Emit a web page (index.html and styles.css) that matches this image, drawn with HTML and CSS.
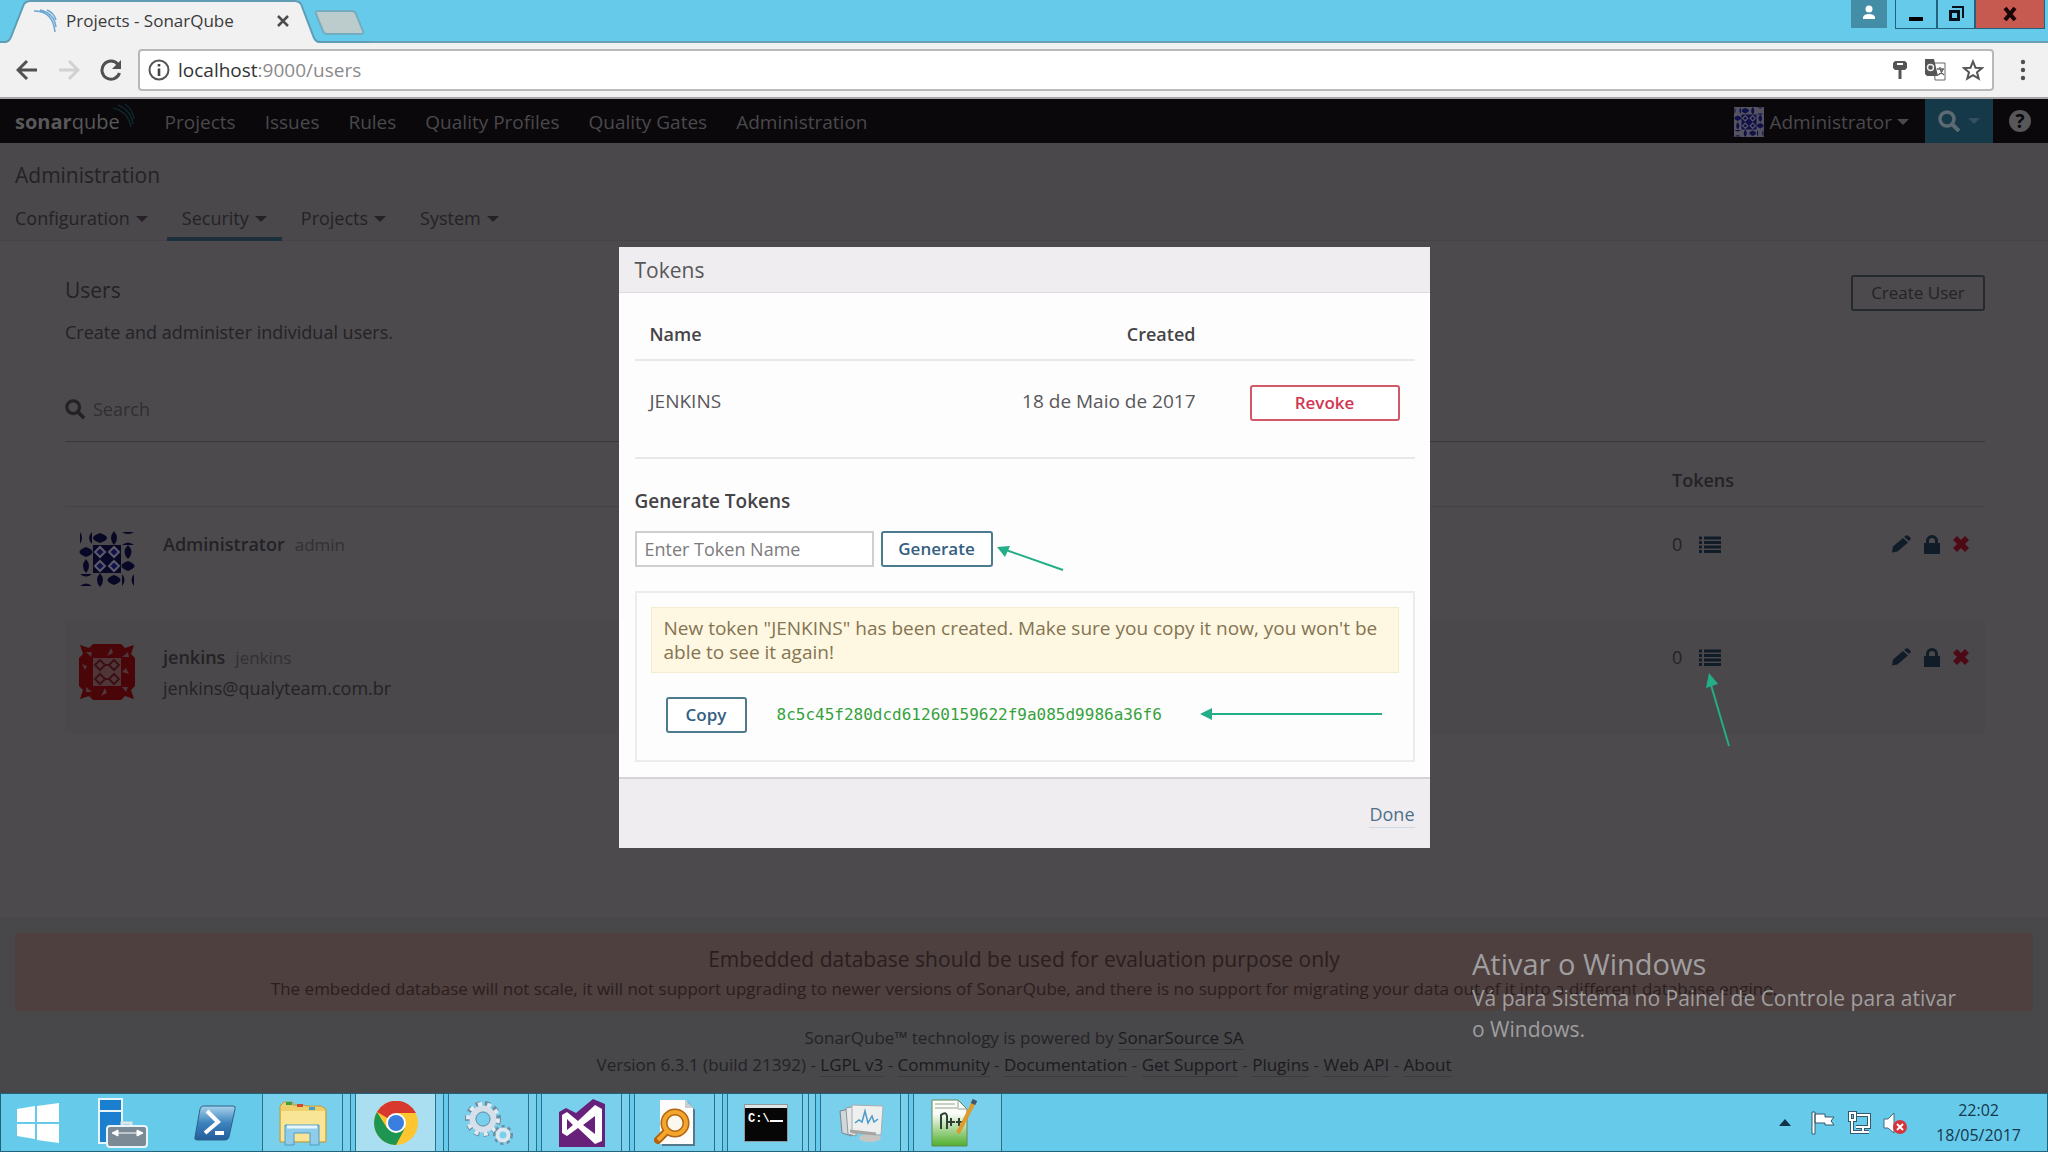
FILE: index.html
```html
<!DOCTYPE html>
<html lang="pt-BR">
<head>
<meta charset="utf-8">
<title>Projects - SonarQube</title>
<link rel="stylesheet" href="styles.css">
</head>
<body>

<!-- shared icons -->
<svg class="sprite" aria-hidden="true">
  <symbol id="list" viewBox="0 0 22 18">
    <path d="M5 1.5h17v3H5zM5 6h17v3H5zM5 10.500h17v3H5zM5 15h17v3H5zM0 1.500h3v3H0zM0 6h3v3H0zM0 10.500h3v3H0zM0 15h3v3H0z"/>
  </symbol>
  <symbol id="pencil" viewBox="0 0 20 18">
    <path d="M1 17.500l1-6L12 3l5 4.500L6.500 16.500zM13.200 2l1.600-1.500q1.200-.8 2.500.2l1.900 1.800q1 1.200 0 2.200L18 6z"/>
  </symbol>
  <symbol id="lock" viewBox="0 0 16 20">
    <path fill-rule="evenodd" d="M0 9h2V7a6 6 0 0 1 12 0v2h2v11H0zM5 9h6V7a3 3 0 0 0-6 0z"/>
  </symbol>
  <symbol id="cross" viewBox="0 0 16 16">
    <path d="M0 4l4-4 4 4 4-4 4 4-4 4 4 4-4 4-4-4-4 4-4-4 4-4z"/>
  </symbol>
  <symbol id="magnifier" viewBox="0 0 22 22">
    <circle cx="9" cy="9" r="7" fill="none" stroke="currentColor" stroke-width="3.500"/>
    <path d="M14 14l7 7" stroke="currentColor" stroke-width="4"/>
  </symbol>
  <symbol id="blue-avatar" viewBox="0 0 56 56">
    <g fill="currentColor">
      <path d="M14 14h28v28H14z"/>
      <path d="M1 1q4 6 0 12zM13 1q-6 6 0 12zM21 2q-14 5 0 10 14-5 0-10zM35 0q-6 7 0 14 6-7 0-14zM43 1h12q-6 4-12 0zM43 14q6-5 12 0z"/>
      <path d="M7 16q-13 5 0 10 13-5 0-10zM7 28q-6 7 0 14 6-7 0-14zM49 14q-7 7 0 14 7-7 0-14zM49 30q-13 5 0 10 13-5 0-10z"/>
      <path d="M1 43h12q-6 5-12 0zM1 55q6-5 12 0zM21 42q-6 7 0 14 6-7 0-14zM35 44q-13 5 0 10 13-5 0-10zM43 43q5 6 0 12zM55 43q-5 6 0 12z"/>
    </g>
    <path class="hole" d="M21 16l5 5-5 5-5-5zM35 16l5 5-5 5-5-5zM21 30l5 5-5 5-5-5zM35 30l5 5-5 5-5-5z"/>
  </symbol>
  <symbol id="red-avatar" viewBox="0 0 56 56">
    <path fill="#4a0508" d="M14 0h28l4 4 9-3-3 9 4 4v28l-4 4 3 9-9-3-4 4H14l-4-4-9 3 3-9-4-4V14l4-4-3-9 9 3z"/>
    <path fill="#4f3638" d="M14 14h28v28H14z"/>
    <path fill="#4f3638" d="M28 12l4-8 2 5zM43 28l4-4 3 6zM22 52l4-8 2 5zM6 26l-3-6 5 2zM7 8l6 0-1 5zM43 13l6-5 1 5zM7 43l6 5-6 0zM43 43l6 0-2 5z"/>
    <g fill="none" stroke="#3d1114" stroke-width="2"><path d="M21 16l5 5-5 5-5-5zM35 16l5 5-5 5-5-5zM21 30l5 5-5 5-5-5zM35 30l5 5-5 5-5-5zM26 21h4M26 35h4"/></g>
  </symbol>
</svg>

<div class="tabstrip">
  <svg class="tab-shape" width="370" height="43" viewBox="0 0 370 43">
    <path d="M4 43q5 0 7-6L24 4q2-4 6-4h265q4 0 6 4l13 34q2 5 6 5z" fill="#f2f1f2"/>
    <path d="M0 42h5q4 0 6-5L24 4q2-3 6-3h265q4 0 6 3l13 34q2 4 6 4h50" fill="none" stroke="#5f9db4" stroke-width="2"/>
    <path d="M318 11h34q3 0 4 3l7 17q1 3-2 3h-34q-3 0-4-3l-7-17q-1-3 2-3z" fill="#bccbcb" stroke="#74adc0" stroke-width="2"/>
  </svg>
  <div class="tab">
    <svg width="24" height="24" viewBox="0 0 24 24" fill="none" stroke="#6aa7d2" stroke-width="1.500"><path d="M1 2q19 0 21 21M7 1q14 3 16 17M14 1q7 3 9 10"/></svg>
    <span class="tab-title">Projects - SonarQube</span>
    <button class="tab-close" aria-label="Fechar guia"><svg width="14" height="14" viewBox="0 0 14 14" stroke="#4c4c4c" stroke-width="2.500"><path d="M2 2l10 10M12 2L2 12"/></svg></button>
  </div>
  <div class="window-buttons">
    <button class="profile" aria-label="Perfil"><svg width="16" height="20" viewBox="0 0 16 20" fill="#fff"><circle cx="8" cy="5" r="3.500"/><path d="M2 15v-2q1-3 6-3t6 3v2z"/></svg></button>
    <button class="minimize" aria-label="Minimizar"><svg width="16" height="18" viewBox="0 0 16 18"><path d="M1 12h14v4H1z"/></svg></button>
    <button class="restore" aria-label="Restaurar"><svg width="16" height="18" viewBox="0 0 16 18" fill="none" stroke="#061018"><path d="M2.500 6.500h8v8h-8z" stroke-width="3"/><path d="M4 2h11v11" stroke-width="2"/></svg></button>
    <button class="close" aria-label="Fechar"><svg width="14" height="14" viewBox="0 0 14 14" stroke="#1a0606" stroke-width="4"><path d="M2 1l10 12M12 1L2 13"/></svg></button>
  </div>
</div>

<div class="toolbar">
  <button aria-label="Voltar"><svg width="22" height="22" viewBox="0 0 22 22" fill="none" stroke="#505050" stroke-width="3"><path d="M21 11H3M11 2l-9 9 9 9"/></svg></button>
  <button aria-label="Avançar"><svg width="22" height="22" viewBox="0 0 22 22" fill="none" stroke="#d2d1d2" stroke-width="3"><path d="M1 11h18M11 2l9 9-9 9"/></svg></button>
  <button aria-label="Recarregar"><svg width="22" height="22" viewBox="0 0 22 22" fill="none" stroke="#505050" stroke-width="3"><path d="M19.500 14A9 9 0 1 1 18 5.500"/><path d="M21 1v9h-9z" fill="#505050" stroke="none"/></svg></button>
  <div class="address">
    <svg width="22" height="22" viewBox="0 0 22 22"><circle cx="11" cy="11" r="9.500" fill="none" stroke="#555" stroke-width="2"/><path d="M9.700 5h2.600v2.600H9.700zM9.700 9.500h2.600V17H9.700z" fill="#444"/></svg>
    <span class="url">localhost<span>:9000/users</span></span>
    <svg width="16" height="20" viewBox="0 0 16 20" fill="#555"><path d="M3 1h10l2 2v5l-2 2H9.500v9h-3v-9H3L1 8V3zM5 3v2h6V3z" fill-rule="evenodd"/></svg>
    <svg width="22" height="22" viewBox="0 0 22 22"><path d="M10 4h11v17H11z" fill="#fff" stroke="#666"/><path d="M1 0h9l4 17H3l-2-2z" fill="#555"/><circle cx="6.500" cy="8.500" r="3" fill="none" stroke="#eee" stroke-width="1.500"/><path d="M13 10h7M16 8v2q1 4 4 6M19 10q-1 4-5 6" fill="none" stroke="#666" stroke-width="1.300"/></svg>
    <svg width="22" height="22" viewBox="0 0 22 22" fill="none" stroke="#555" stroke-width="2"><path d="M11 2.500l2.500 6.200 6.500.4-5 4.200 1.700 6.300-5.700-3.500-5.700 3.500L7 13.300 2 9.100l6.500-.4z"/></svg>
  </div>
  <button aria-label="Menu"><svg width="6" height="22" viewBox="0 0 6 22" fill="#505050"><circle cx="3" cy="3" r="2.200"/><circle cx="3" cy="11" r="2.200"/><circle cx="3" cy="19" r="2.200"/></svg></button>
</div>

<div class="page">
  <nav class="global-nav">
    <a class="logo" href="#"><b>sonar</b>qube<svg width="24" height="30" viewBox="0 0 24 30" fill="none" stroke="#10262d" stroke-width="1.500"><path d="M1 7q15 3 18 19M6 4q13 5 15 19M13 3q8 6 9 15"/></svg></a>
    <a href="#">Projects</a>
    <a href="#">Issues</a>
    <a href="#">Rules</a>
    <a href="#">Quality Profiles</a>
    <a href="#">Quality Gates</a>
    <a href="#">Administration</a>
    <a class="account" href="#"><svg class="small-avatar" width="30" height="30"><use href="#blue-avatar"/></svg>Administrator<i class="caret"></i></a>
    <a class="nav-search" href="#" aria-label="Search"><svg width="22" height="22"><use href="#magnifier"/></svg><i class="caret"></i></a>
    <a class="help" href="#">?</a>
  </nav>

  <header class="context-nav">
    <h1>Administration</h1>
    <div class="context-tabs">
      <a href="#">Configuration<i class="caret"></i></a>
      <a class="active" href="#">Security<i class="caret"></i></a>
      <a href="#">Projects<i class="caret"></i></a>
      <a href="#">System<i class="caret"></i></a>
    </div>
  </header>

  <main class="users">
    <div class="users-header">
      <div>
        <h2>Users</h2>
        <p>Create and administer individual users.</p>
      </div>
      <button class="create-user">Create User</button>
    </div>
    <label class="search"><svg width="20" height="20"><use href="#magnifier"/></svg><input type="text" placeholder="Search" aria-label="Search"></label>
    <table class="users-table">
      <thead>
        <tr><th class="col-avatar"></th><th></th><th class="col-tokens">Tokens</th><th class="col-actions"></th></tr>
      </thead>
      <tbody>
        <tr>
          <td><svg class="avatar blue" width="56" height="56"><use href="#blue-avatar"/></svg></td>
          <td><b>Administrator</b><span class="login">admin</span></td>
          <td><div class="tokens">0<button aria-label="Tokens"><svg width="22" height="20"><use href="#list"/></svg></button></div></td>
          <td><div class="actions">
            <button aria-label="Edit"><svg width="20" height="20"><use href="#pencil"/></svg></button>
            <button aria-label="Change password"><svg width="16" height="20"><use href="#lock"/></svg></button>
            <button class="delete" aria-label="Delete"><svg width="16" height="16"><use href="#cross"/></svg></button>
          </div></td>
        </tr>
        <tr class="shaded">
          <td><svg class="avatar" width="56" height="56"><use href="#red-avatar"/></svg></td>
          <td><b>jenkins</b><span class="login">jenkins</span><div class="email">jenkins@qualyteam.com.br</div></td>
          <td><div class="tokens">0<button aria-label="Tokens"><svg width="22" height="20"><use href="#list"/></svg></button>
            <svg class="arrow arrow-list" width="30" height="76" viewBox="0 0 30 76"><path d="M6 13l18 61" /><path class="head" d="M4 1l9 11-12 4z"/></svg>
          </div></td>
          <td><div class="actions">
            <button aria-label="Edit"><svg width="20" height="20"><use href="#pencil"/></svg></button>
            <button aria-label="Change password"><svg width="16" height="20"><use href="#lock"/></svg></button>
            <button class="delete" aria-label="Delete"><svg width="16" height="16"><use href="#cross"/></svg></button>
          </div></td>
        </tr>
      </tbody>
    </table>
  </main>

  <footer class="page-footer">
    <div class="db-warning">
      <div class="db-title">Embedded database should be used for evaluation purpose only</div>
      <div>The embedded database will not scale, it will not support upgrading to newer versions of SonarQube, and there is no support for migrating your data out of it into a different database engine.</div>
    </div>
    <div>SonarQube™ technology is powered by <a href="#">SonarSource SA</a></div>
    <div>Version 6.3.1 (build 21392) - <a href="#">LGPL v3</a> - <a href="#">Community</a> - <a href="#">Documentation</a> - <a href="#">Get Support</a> - <a href="#">Plugins</a> - <a href="#">Web API</a> - <a href="#">About</a></div>
  </footer>

  <div class="overlay">
    <div class="modal" role="dialog">
      <h2 class="modal-head">Tokens</h2>
      <div class="modal-body">
        <table class="token-table">
          <thead><tr><th>Name</th><th class="created">Created</th><th class="col-revoke"></th></tr></thead>
          <tbody><tr><td>JENKINS</td><td class="created">18 de Maio de 2017</td><td class="created"><button class="button revoke">Revoke</button></td></tr></tbody>
        </table>
        <h3>Generate Tokens</h3>
        <form class="generate">
          <input type="text" placeholder="Enter Token Name" aria-label="Token name">
          <button type="button" class="button">Generate</button>
          <svg class="arrow arrow-generate" width="70" height="28" viewBox="0 0 70 28"><path d="M10 5l57 20"/><path class="head" d="M1 2l13-1-5 11z"/></svg>
        </form>
        <div class="new-token">
          <div class="alert">New token "JENKINS" has been created. Make sure you copy it now, you won't be able to see it again!</div>
          <div class="copy-row">
            <button class="button copy">Copy</button>
            <code>8c5c45f280dcd61260159622f9a085d9986a36f6</code>
            <svg class="arrow arrow-token" width="184" height="14" viewBox="0 0 184 14"><path d="M10 7h173"/><path class="head" d="M1 7l12-6v12z"/></svg>
          </div>
        </div>
      </div>
      <div class="modal-foot"><a href="#">Done</a></div>
    </div>
  </div>

  <div class="watermark">
    <div class="watermark-title">Ativar o Windows</div>
    <div>Vá para Sistema no Painel de Controle para ativar</div>
    <div>o Windows.</div>
  </div>
</div>

<div class="taskbar">
  <button class="pin" aria-label="Iniciar"><svg width="42" height="40" viewBox="0 0 42 40" fill="#fff"><path d="M0 6l18-3v16H0zM20 3l22-3v19H20zM0 21h18v15L0 33zM20 21h22v19l-22-3z"/></svg></button>
  <button class="pin" aria-label="Gerenciador do Servidor"><svg width="50" height="50" viewBox="0 0 50 50"><path d="M1 1h23v44H1z" fill="#1b7fd0" stroke="#e8f4fa" stroke-width="2"/><path d="M1 13h23" stroke="#e8f4fa" stroke-width="2"/><path d="M24 28v-3h9v3" fill="none" stroke="#dce6ea" stroke-width="3"/><rect x="9" y="28" width="40" height="21" rx="3" fill="#7b8a94" stroke="#e8f4fa" stroke-width="2"/><path d="M16 35h27M14 35l6-3v6zM45 35l-6-3v6z" fill="#fff" stroke="#fff"/></svg></button>
  <button class="pin" aria-label="PowerShell"><svg width="42" height="36" viewBox="0 0 42 36"><defs><linearGradient id="ps" x2="0" y2="1"><stop stop-color="#a8d3ec"/><stop offset=".5" stop-color="#3c83bd"/><stop offset="1" stop-color="#235d9c"/></linearGradient></defs><path d="M9 1h30q3 0 2 3l-6 28q-1 3-4 3H3q-3 0-2-3L6 4q1-3 3-3z" fill="url(#ps)" stroke="#2d6287"/><path d="M13 6l11 11-13 11M21 28h9" fill="none" stroke="#fff" stroke-width="4"/></svg></button>
  <button class="task stacked" aria-label="Explorador"><svg width="48" height="46" viewBox="0 0 48 46"><path d="M1 6l4-4h9v3h10l4 1h14l5 3v33H1z" fill="#edd06c" stroke="#c19b39"/><path d="M2 11h44v30H2z" fill="#f8e595"/><path d="M7 2h6v3H7z" fill="#3b9d4a"/><path d="M18 4h6v3h-6z" fill="#cf4a32"/><path d="M30 7h6v3h-6z" fill="#47a0c9"/><path d="M6 45V25h34v20h-9V33H15v12z" fill="#8fcce9" stroke="#4f9cc2"/><path d="M8 27h30" stroke="#e7f6fd" stroke-width="3"/></svg></button>
  <button class="task stacked current" aria-label="Chrome"><svg width="44" height="44" viewBox="0 0 44 44"><circle cx="22" cy="22" r="22" fill="#fdc52f"/><path d="M22 22L3 11a22 22 0 0 1 39 1H22z" fill="#d9382f"/><path d="M3 11a22 22 0 0 0 19 33l9-17-9 5-9-5z" fill="#1e9550"/><circle cx="22" cy="22" r="10" fill="#fff"/><circle cx="22" cy="22" r="8" fill="#3a7fe0"/></svg></button>
  <button class="task stacked" aria-label="Serviços"><svg width="48" height="44" viewBox="0 0 48 44" fill="none"><circle cx="18" cy="18" r="15" stroke="#6f8da2" stroke-width="6" stroke-dasharray="5 4"/><circle cx="18" cy="18" r="14.500" stroke="#e3ebf2" stroke-width="5" stroke-dasharray="4 5"/><circle cx="18" cy="18" r="10.500" stroke="#d5e0ea" stroke-width="6"/><circle cx="18" cy="18" r="7" stroke="#6f8da2"/><circle cx="38" cy="34" r="8" stroke="#6f8da2" stroke-width="4" stroke-dasharray="3 3"/><circle cx="38" cy="34" r="5.500" stroke="#dce7f0" stroke-width="4"/></svg></button>
  <button class="task stacked" aria-label="Visual Studio"><svg width="46" height="48" viewBox="0 0 46 48"><path d="M0 13l7-4 10 5L34 0l12 5v43H0z" fill="#68217a"/><path d="M3 16l5-3 11 9L36 6l7 4v32l-7 3-17-16-11 8-5-3zM8 20v11l6-5zM36 17L24 26l12 9z" fill="#fff" fill-rule="evenodd"/></svg></button>
  <button class="task stacked" aria-label="Pesquisa"><svg width="42" height="48" viewBox="0 0 42 48"><path d="M8 3h26l7 8v36H8z" fill="#55798a"/><path d="M6 1h25l8 8v36H6z" fill="#fdfcfa"/><path d="M31 1v8h8z" fill="#c9ced0"/><path d="M14 31L4 41" stroke="#b06411" stroke-width="8" stroke-linecap="round"/><circle cx="21" cy="24" r="11" fill="#fdf8ed" stroke="#b06411" stroke-width="7"/><circle cx="21" cy="24" r="11" fill="none" stroke="#f3a52c" stroke-width="4"/><path d="M14 31L4 41" stroke="#f3a52c" stroke-width="4"/></svg></button>
  <button class="task triple" aria-label="Prompt de comando"><svg width="44" height="38" viewBox="0 0 44 38"><path d="M0 0h44v38H0z" fill="#8d999d"/><path d="M1 4h42v33H1z" fill="#060606"/><path d="M1 1h42v3H1z" fill="#dfe4e6"/><text x="4" y="18" class="prompt">C:\</text><path d="M26 17h13" stroke="#fff" stroke-width="2"/></svg></button>
  <button class="task stacked" aria-label="Monitor de desempenho"><svg width="46" height="40" viewBox="0 0 46 40"><path d="M2 8l10-2 2 27-10-3z" fill="#d2d7da" stroke="#77858c"/><path d="M8 5l10-2v30l-8-2z" fill="#e7e8e8" stroke="#8f9a9f"/><ellipse cx="32" cy="35" rx="11" ry="4" fill="#c6c5c2"/><path d="M14 2l31 1-2 29-29-2z" fill="#eeefef" stroke="#a8adaf"/><path d="M17 20l4-3 3 2 3-11 3 12 4-7 2 6 4-3" fill="none" stroke="#4b9bc7" stroke-width="1.500"/><path d="M12 28l26 3" stroke="#a5a5a3" stroke-width="3"/></svg></button>
  <button class="task" aria-label="Notepad++"><svg width="46" height="48" viewBox="0 0 46 48"><defs><linearGradient id="npp" x2="0" y2="1"><stop offset=".3" stop-color="#fbfcf7"/><stop offset="1" stop-color="#4fae2c"/></linearGradient></defs><path d="M1 1h26l9 9v37H1z" fill="url(#npp)" stroke="#65875b"/><path d="M4 5h20M4 9h22M27 1v9h9" fill="none" stroke="#94a493"/><path d="M10 30V16q5-4 6 1v13M17 23h7M20 19v8M25 23h7M28 19v8" fill="none" stroke="#304236" stroke-width="2"/><path d="M43 3L27 34" stroke="#e09a2b" stroke-width="4"/><path d="M44 1l-2 4" stroke="#44556e" stroke-width="5"/></svg></button>
  <div class="tray">
    <svg width="12" height="8" viewBox="0 0 12 8" fill="#12324a"><path d="M0 7l6-7 6 7z"/></svg>
    <svg width="24" height="24" viewBox="0 0 24 24" fill="#fff" stroke="#35586b"><path d="M1 1h3v22H1zM4 3h10v3h9l-3 4 3 4h-9v-2H4z"/></svg>
    <svg width="24" height="24" viewBox="0 0 24 24" fill="none"><g stroke="#35586b" stroke-width="4"><path d="M10 4h12v12H9M16 16v5M10 21h12M3 2h5v7H3zM5 9v12h6"/></g><g stroke="#fff" stroke-width="2"><path d="M10 4h12v12H9M16 16v5M10 21h12M3 2h5v7H3zM5 9v12h6"/></g></svg>
    <svg width="24" height="24" viewBox="0 0 24 24"><path d="M1 8h4l6-6v20l-6-5H1z" fill="#fff" stroke="#4c6b7b"/><circle cx="17" cy="16" r="7" fill="#d8323a"/><path d="M14 13l6 6M20 13l-6 6" stroke="#fff" stroke-width="2"/></svg>
    <div class="clock"><div>22:02</div><div>18/05/2017</div></div>
  </div>
</div>

</body>
</html>
```
FILE: styles.css
```css
*, *::before, *::after {
  box-sizing: border-box;
}

body {
  margin: 0;
  height: 100vh;
  display: flex;
  flex-direction: column;
  overflow: hidden;
  font-family: "Open Sans", "Noto Sans", sans-serif;
  font-size: 18px;
  line-height: 26px;
  color: #242226;
}

h1, h2, h3, p {
  margin: 0;
  font-weight: normal;
}

a {
  color: inherit;
  text-decoration: none;
}

button {
  padding: 0;
  border: 0;
  background: none;
  color: inherit;
  font: inherit;
}

input {
  min-width: 0;
  font: inherit;
}

svg {
  display: block;
  flex: none;
}

.sprite {
  position: absolute;
  width: 0;
  height: 0;
}

/* browser */

.tabstrip {
  position: relative;
  height: 43px;
  display: flex;
  justify-content: space-between;
  background: #66caeb;
  border-bottom: 2px solid #689fb5;
  flex: none;
}

.tab-shape {
  position: absolute;
  left: 0;
  top: 0;
}

.tab {
  position: relative;
  width: 290px;
  display: flex;
  align-items: center;
  padding-left: 33px;
}

.tab-title {
  flex: 1;
  padding-left: 9px;
  font-size: 17px;
  color: #3a3a3a;
}

.window-buttons {
  display: flex;
  align-items: flex-start;
  padding-right: 3px;
}

.window-buttons button {
  height: 29px;
  display: flex;
  align-items: center;
  justify-content: center;
  border: 1px solid #23627c;
  border-top: 0;
}

.window-buttons .profile {
  width: 36px;
  height: 28px;
  margin-right: 8px;
  background: #438ea6;
  border: 0;
}

.minimize {
  width: 42px;
}

.restore {
  width: 38px;
}

.window-buttons .close {
  width: 70px;
  background: #c75a50;
}

.toolbar {
  height: 56px;
  display: flex;
  align-items: center;
  padding: 0 22px 0 16px;
  gap: 20px;
  background: #f2f1f2;
  border-bottom: 2px solid #a8a7a8;
  flex: none;
}

.address {
  flex: 1;
  height: 42px;
  display: flex;
  align-items: center;
  gap: 16px;
  margin: 0 6px 0 -4px;
  padding: 0 8px;
  background: #fff;
  border: 2px solid #b9b7b9;
  border-radius: 4px;
}

.url {
  flex: 1;
  margin-left: -8px;
  font-size: 19px;
  color: #333;
}

.url span {
  color: #8b8a8b;
}

/* page */

.page {
  position: relative;
  flex: 1;
  display: flex;
  flex-direction: column;
  background: #4c4a4c;
}

.caret {
  display: inline-block;
  margin-left: 6px;
  border: 6px solid transparent;
  border-top-color: currentColor;
  border-bottom: 0;
  vertical-align: 3px;
}

.global-nav {
  height: 44px;
  display: flex;
  align-items: center;
  gap: 29px;
  padding: 2px 0 0 15px;
  background: #0a080b;
  color: #4a494b;
  font-size: 19px;
}

.logo {
  display: flex;
  align-items: center;
  font-size: 20px;
  color: #59585a;
}

.logo svg {
  margin: -12px 0 0 -8px;
}

.account {
  display: flex;
  align-items: center;
  margin-left: auto;
  gap: 5px;
}

.account .caret {
  margin-left: 0;
}

.small-avatar {
  background: #55535f;
  color: #10104a;
}

.hole {
  fill: #10104a;
  stroke: #5c5a68;
  stroke-width: 2px;
}

.nav-search {
  width: 68px;
  height: 44px;
  display: flex;
  align-items: center;
  justify-content: center;
  gap: 2px;
  margin: -2px 0 0 -13px;
  background: #16394a;
  color: #5c6a72;
}

.nav-search .caret {
  color: #34505e;
}

.help {
  width: 22px;
  height: 22px;
  margin: -2px 17px 0 -13px;
  border-radius: 50%;
  background: #575658;
  color: #0a080b;
  font-weight: bold;
  line-height: 22px;
  text-align: center;
}

.context-nav {
  height: 98px;
  padding-top: 18px;
  background: #4a484a;
  border-bottom: 1px solid #454345;
}

.context-nav h1 {
  padding-left: 15px;
  font-size: 21px;
  line-height: 28px;
}

.context-tabs {
  display: flex;
  gap: 4px;
  padding-top: 6px;
}

.context-tabs a {
  height: 46px;
  padding: 0 15px;
  line-height: 46px;
}

.context-tabs .active {
  box-shadow: inset 0 -4px #1d2f3d;
}

.users {
  padding: 34px 63px 0 65px;
}

.users-header {
  display: flex;
  justify-content: space-between;
  align-items: flex-start;
}

.users h2 {
  margin-bottom: 14px;
  font-size: 21px;
  line-height: 30px;
}

.create-user {
  width: 134px;
  height: 36px;
  border: 2px solid #242a2e;
  border-radius: 3px;
  font-size: 17px;
}

.search {
  display: flex;
  align-items: center;
  gap: 8px;
  margin-top: 48px;
  padding-bottom: 16px;
  border-bottom: 1px solid #3a383a;
}

.search input {
  flex: 1;
  height: 32px;
  padding: 0;
  border: 0;
  background: none;
}

.search input::placeholder {
  color: #302e31;
  opacity: 1;
}

.users-table {
  width: 100%;
  border-collapse: collapse;
  table-layout: fixed;
}

.users-table th {
  height: 64px;
  padding: 12px 15px 0 0;
  border-bottom: 1px solid #444244;
  text-align: left;
  font-weight: 600;
}

.col-avatar {
  width: 98px;
}

.col-tokens {
  width: 171px;
}

.col-actions {
  width: 142px;
}

.users-table td {
  height: 114px;
  padding: 24px 16px 0 0;
  vertical-align: top;
}

.users-table td b {
  font-weight: 600;
}

.shaded {
  background: #4a484a;
}

.avatar {
  margin-left: 14px;
}

.blue {
  color: #080826;
}

.blue .hole {
  fill: #080826;
}

.login {
  margin-left: 10px;
  font-size: 17px;
  color: #323033;
}

.email {
  padding-top: 4px;
}

.tokens {
  position: relative;
  display: flex;
  align-items: center;
  gap: 17px;
}

.tokens svg, .actions svg {
  fill: #101d29;
}

.actions {
  display: flex;
  align-items: center;
  justify-content: flex-end;
  gap: 13px;
  height: 26px;
}

.actions .delete svg {
  fill: #4d0a16;
}

.page-footer {
  margin-top: auto;
  padding: 16px 15px 15px;
  background: #48474a;
  font-size: 17px;
  line-height: 27px;
  text-align: center;
}

.page-footer a {
  border-bottom: 1px solid #3b3a3d;
  color: #1b1a1d;
}

.db-warning {
  margin-bottom: 13px;
  padding: 11px 0 7px;
  background: #4d403f;
  line-height: 30px;
  color: #2b1d1e;
}

.db-title {
  font-size: 21px;
}

/* modal */

.overlay {
  position: absolute;
  left: 0;
  right: 0;
  top: 148px;
  display: flex;
  justify-content: center;
}

.modal {
  width: 100%;
  max-width: 811px;
  background: #fefdfe;
  color: #58575a;
}

.modal-head {
  height: 46px;
  padding: 0 16px;
  background: #efedef;
  border-bottom: 1px solid #dddbdd;
  font-size: 21px;
  line-height: 46px;
}

.modal-body {
  padding: 15px 15px 15px 16px;
}

.token-table {
  width: 100%;
  border-collapse: collapse;
}

.token-table th {
  height: 52px;
  padding: 0 15px;
  border-bottom: 2px solid #e9e7ea;
  color: #454447;
  font-weight: 600;
  text-align: left;
}

.token-table td {
  height: 98px;
  padding: 24px 15px 0;
  border-bottom: 2px solid #e9e7ea;
  font-size: 19px;
  line-height: 32px;
  vertical-align: top;
}

.token-table .created {
  text-align: right;
}

.col-revoke {
  width: 204px;
}

.button {
  width: 112px;
  height: 36px;
  border: 2px solid #4d7b8e;
  border-radius: 3px;
  background: #fff;
  color: #34607f;
  font-size: 17px;
  font-weight: 600;
}

.revoke {
  width: 150px;
  border-color: #cf5967;
  color: #d13550;
}

.modal h3 {
  margin: 29px 0 17px;
  color: #454447;
  font-size: 19px;
  font-weight: 600;
}

.generate {
  position: relative;
  display: flex;
  gap: 7px;
}

.generate input {
  width: 239px;
  height: 36px;
  padding: 0 8px;
  border: 2px solid #d0ced1;
  background: #fff;
}

.generate input::placeholder {
  color: #7c7b7e;
  opacity: 1;
}

.new-token {
  margin-top: 24px;
  padding: 14px 14px 27px;
  border: 2px solid #edebee;
}

.alert {
  padding: 8px 12px;
  border: 1px solid #f5ecd0;
  background: #fef7e1;
  color: #847452;
  font-size: 19px;
  line-height: 24px;
}

.copy-row {
  position: relative;
  display: flex;
  align-items: center;
  gap: 30px;
  margin-top: 24px;
  padding-left: 15px;
}

.copy {
  width: 81px;
}

code {
  font-family: "DejaVu Sans Mono", monospace;
  font-size: 16px;
  color: #35a23b;
}

.modal-foot {
  height: 71px;
  padding: 0 15px;
  border-top: 2px solid #d5d3d6;
  background: #efedef;
  line-height: 70px;
  text-align: right;
}

.modal-foot a {
  padding-bottom: 1px;
  border-bottom: 1px solid #cdd9e0;
  color: #50708a;
}

.arrow {
  position: absolute;
  fill: none;
  stroke: #23ae88;
  stroke-width: 2px;
}

.arrow .head {
  fill: #23ae88;
  stroke: none;
}

.tokens .arrow {
  left: 33px;
  top: 28px;
  fill: #23ae88;
}

.arrow-generate {
  left: 361px;
  top: 14px;
}

.arrow-token {
  right: 16px;
  top: 10px;
}

.watermark {
  position: absolute;
  right: 20px;
  bottom: 48px;
  width: 556px;
  font-size: 21px;
  line-height: 31px;
  color: #a09e9f;
}

.watermark-title {
  font-size: 29px;
  line-height: 38px;
}

/* taskbar */

.taskbar {
  height: 59px;
  display: flex;
  gap: 4px;
  background: #66caeb;
  border: 1px solid #22627a;
  flex: none;
}

.taskbar button {
  display: flex;
  align-items: center;
  justify-content: center;
}

.pin {
  width: 84px;
}

.pin:first-child {
  width: 73px;
}

.pin:nth-child(2) {
  width: 89px;
}

.pin:nth-child(3) {
  width: 87px;
}

.task {
  width: 89px;
  border-left: 1px solid #2b6f8a;
  border-right: 1px solid #2b6f8a;
  background: #79d0ec;
}

.taskbar .task {
  padding-right: 8px;
}

.taskbar .stacked {
  box-shadow: inset -7px 0 #79d0ec, inset -8px 0 #2b6f8a;
}

.taskbar .current {
  background: #a9dff1;
}

.taskbar .triple {
  padding-right: 12px;
  box-shadow: inset -6px 0 #79d0ec, inset -7px 0 #2b6f8a, inset -12px 0 #79d0ec, inset -13px 0 #2b6f8a;
}

.prompt {
  font: bold 12px "Liberation Mono", monospace;
  fill: #fff;
}

.tray {
  display: flex;
  align-items: center;
  gap: 12px;
  margin-left: auto;
  padding-right: 26px;
  color: #17384c;
}

.tray svg:first-child {
  margin-right: 8px;
}

.clock {
  margin-left: 17px;
  font-size: 16px;
  line-height: 25px;
  text-align: center;
}
```
